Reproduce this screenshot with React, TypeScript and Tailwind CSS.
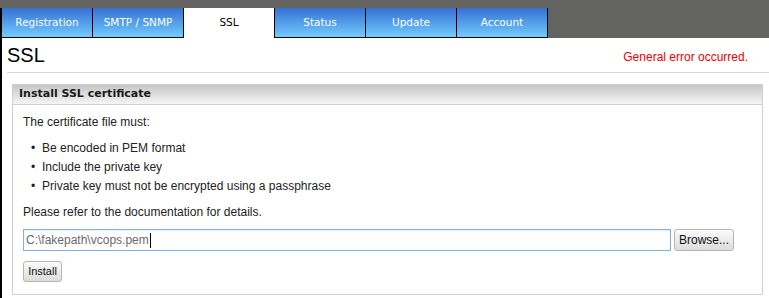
import React from "react";

const tabs = ["Registration", "SMTP / SNMP", "SSL", "Status", "Update", "Account"];

export default function App() {
  return (
    <div className="w-[769px] h-[298px] bg-white overflow-hidden font-['Liberation_Sans',Arial,sans-serif] text-[12px] text-[#222]">
      {/* top bar with tabs */}
      <div className="h-[38px] bg-[#636361] pt-[8px] flex">
        <div className="w-[2px] h-[30px] bg-black" />
        {tabs.map((t) =>
          t === "SSL" ? (
            <div
              key={t}
              className="w-[91px] h-[30px] bg-white border-r border-black flex items-center justify-center pb-[1px] text-black font-['DejaVu_Sans',Verdana,sans-serif] text-[10.5px]"
            >
              {t}
            </div>
          ) : (
            <div
              key={t}
              className="w-[91px] h-[30px] bg-gradient-to-b from-[#3670d3] to-[#74cbfc] border-r border-b border-black flex items-center justify-center text-white font-['DejaVu_Sans',Verdana,sans-serif] text-[10.5px]"
            >
              {t}
            </div>
          )
        )}
      </div>

      <div className="border-l-2 border-black h-[260px]">
        {/* heading */}
        <div className="h-[34px] flex items-end justify-between pl-[5px] pr-[21px] pb-[7px]">
          <div className="text-[20px] leading-[20px] text-black">SSL</div>
          <div className="text-[12px] leading-[14px] text-[#f00000] mb-[1px]">General error occurred.</div>
        </div>
        <div className="ml-[5px] h-px bg-[#d6d6d6]" />

        {/* panel */}
        <div className="mt-[11px] ml-[10px] w-[751px] h-[211px] border border-[#cfcfcf]">
          <div className="h-[20px] bg-gradient-to-b from-[#c6c6c6] to-[#f5f5f5] border-b border-[#d0d0d0] flex items-center pl-[6px] font-['DejaVu_Sans',Verdana,sans-serif] font-bold text-[11px] text-[#1a1a1a]">
            Install SSL certificate
          </div>
          <div className="pl-[10px] pt-[10px]">
            <div className="leading-[14px]">The certificate file must:</div>
            <ul className="mt-[12px] flex flex-col gap-[5px]">
              {[
                "Be encoded in PEM format",
                "Include the private key",
                "Private key must not be encrypted using a passphrase",
              ].map((b) => (
                <li key={b} className="flex leading-[14px]">
                  <span className="w-[19px] pl-[8px]">•</span>
                  <span>{b}</span>
                </li>
              ))}
            </ul>
            <div className="mt-[12px] leading-[14px]">Please refer to the documentation for details.</div>
            <div className="mt-[10px] flex items-center gap-[3px]">
              <div className="w-[648px] h-[22px] border border-[#7cb1e0] shadow-[inset_0_1px_2px_rgba(0,0,0,0.08)] flex items-center pl-[2px] text-[#6b6b6b]">
                <span>C:\fakepath\vcops.pem</span>
                <span className="w-px h-[15px] bg-black ml-[1px]" />
              </div>
              <button className="w-[60px] h-[22px] rounded-[3px] border border-[#b5b5b5] bg-gradient-to-b from-[#fbfbfb] to-[#dcdcdc] text-[12px] text-[#111] pb-[1px]">
                Browse...
              </button>
            </div>
            <button className="mt-[10px] w-[39px] h-[21px] rounded-[3px] border border-[#b5b5b5] bg-gradient-to-b from-[#fbfbfb] to-[#dcdcdc] text-[11px] text-[#111]">
              Install
            </button>
          </div>
        </div>
      </div>
    </div>
  );
}
